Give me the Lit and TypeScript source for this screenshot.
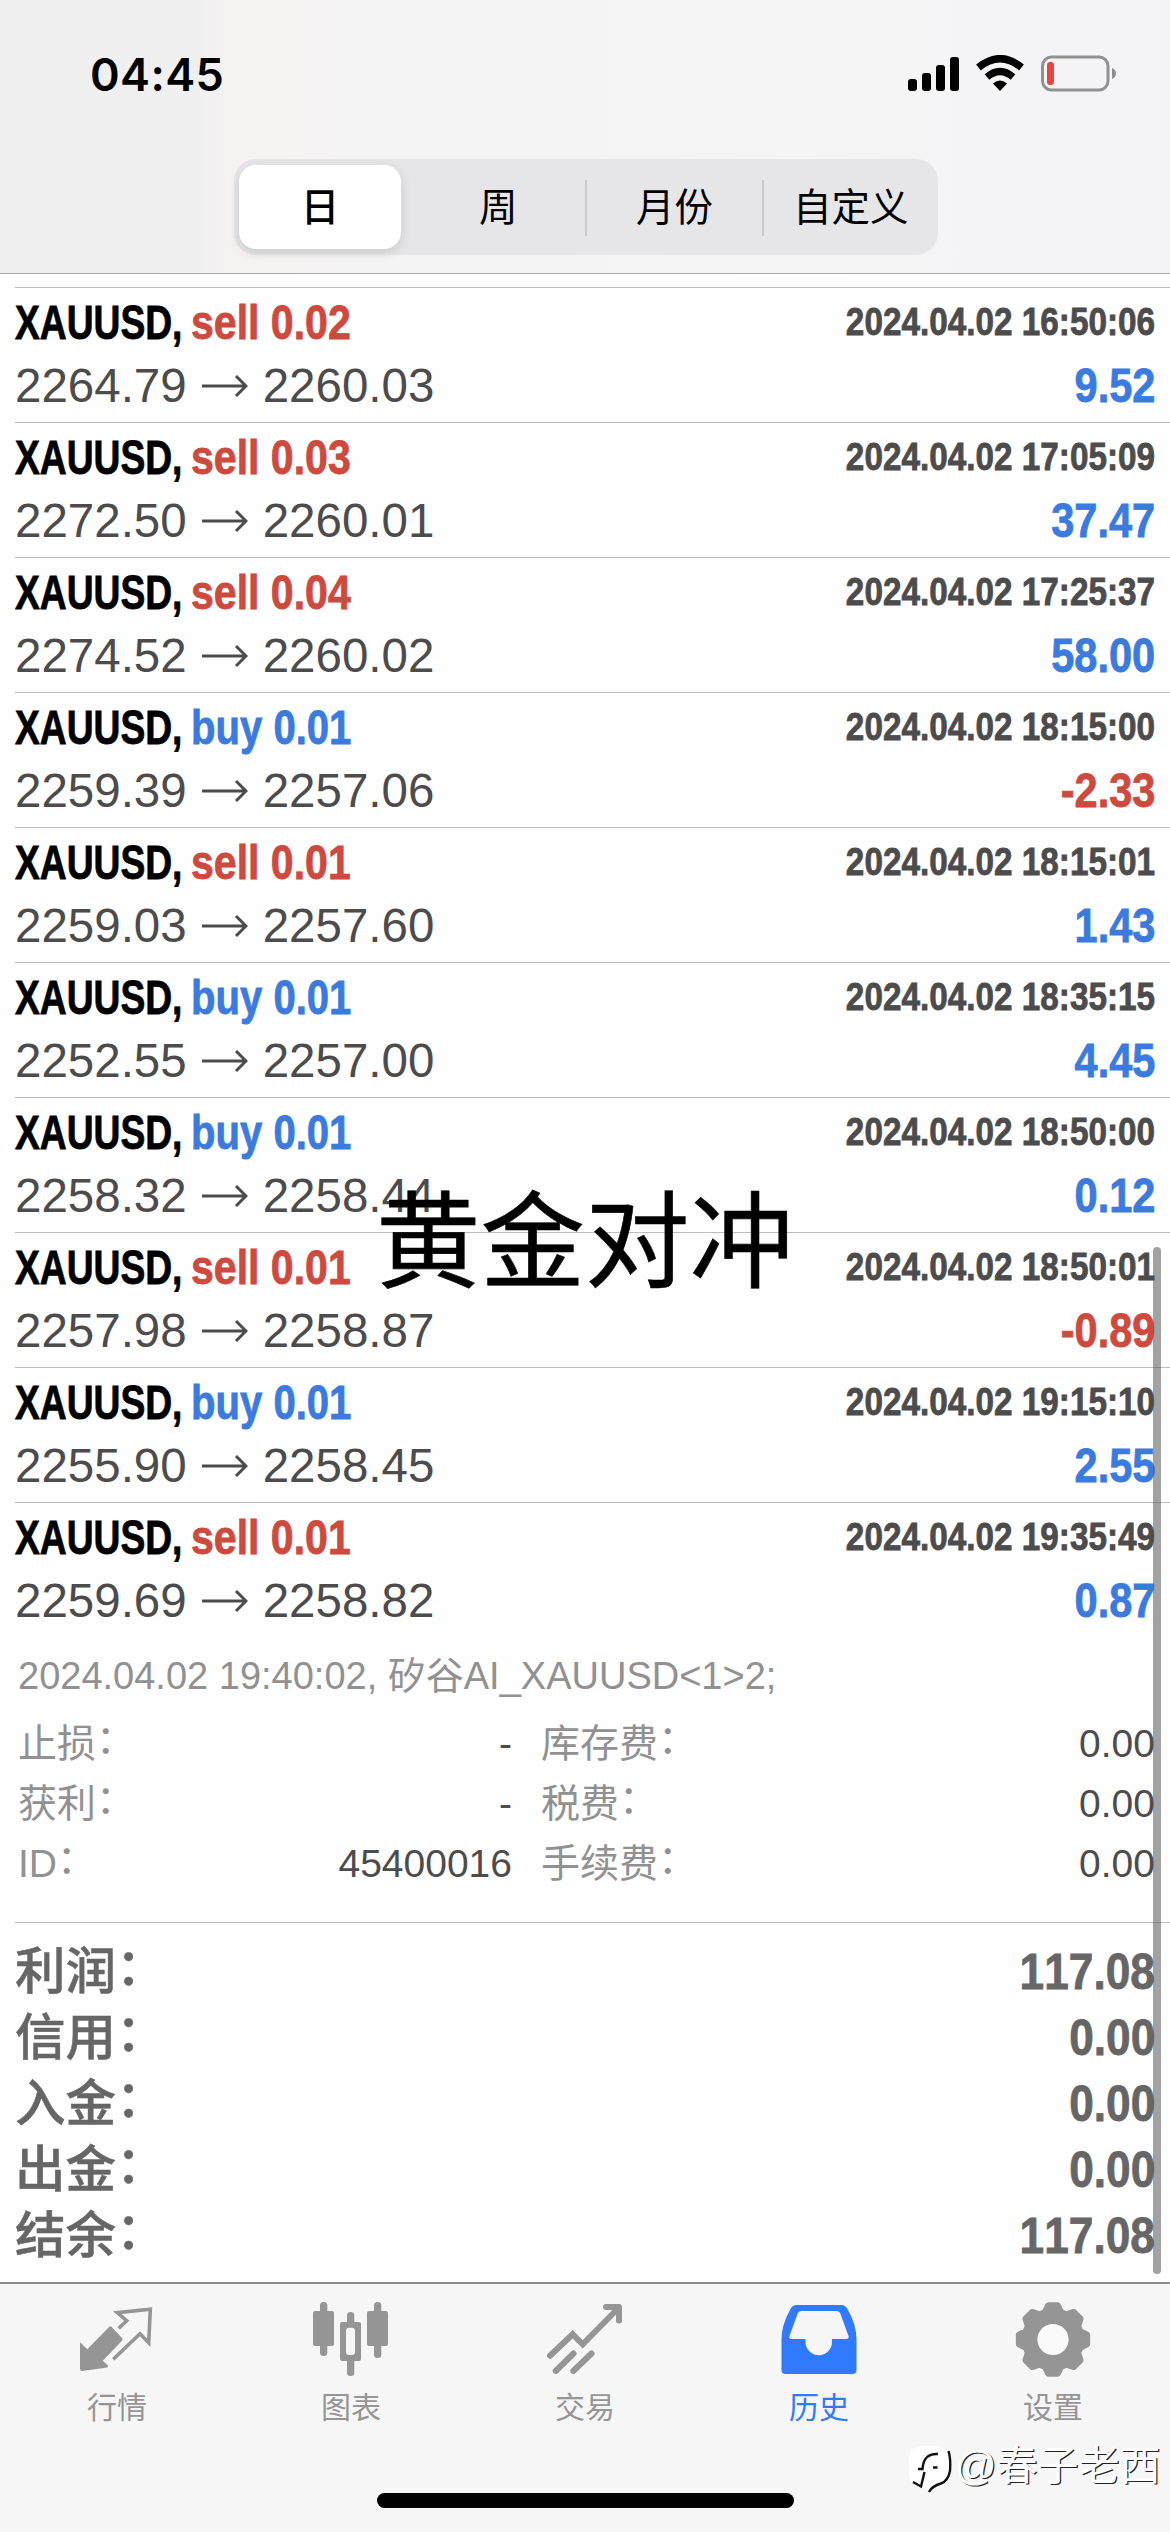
import { LitElement, html, svg, css } from "lit";
import { customElement } from "lit/decorators.js";
import { classMap } from "lit/directives/class-map.js";

interface Deal {
  side: "buy" | "sell";
  lot: string;
  open: string;
  close: string;
  time: string;
  profit: string;
}

const deals: Deal[] = [
  { side: "sell", lot: "0.02", open: "2264.79", close: "2260.03", time: "2024.04.02 16:50:06", profit: "9.52" },
  { side: "sell", lot: "0.03", open: "2272.50", close: "2260.01", time: "2024.04.02 17:05:09", profit: "37.47" },
  { side: "sell", lot: "0.04", open: "2274.52", close: "2260.02", time: "2024.04.02 17:25:37", profit: "58.00" },
  { side: "buy", lot: "0.01", open: "2259.39", close: "2257.06", time: "2024.04.02 18:15:00", profit: "-2.33" },
  { side: "sell", lot: "0.01", open: "2259.03", close: "2257.60", time: "2024.04.02 18:15:01", profit: "1.43" },
  { side: "buy", lot: "0.01", open: "2252.55", close: "2257.00", time: "2024.04.02 18:35:15", profit: "4.45" },
  { side: "buy", lot: "0.01", open: "2258.32", close: "2258.44", time: "2024.04.02 18:50:00", profit: "0.12" },
  { side: "sell", lot: "0.01", open: "2257.98", close: "2258.87", time: "2024.04.02 18:50:01", profit: "-0.89" },
  { side: "buy", lot: "0.01", open: "2255.90", close: "2258.45", time: "2024.04.02 19:15:10", profit: "2.55" },
  { side: "sell", lot: "0.01", open: "2259.69", close: "2258.82", time: "2024.04.02 19:35:49", profit: "0.87" },
];

const details = [
  ["止损", "-", "库存费", "0.00"],
  ["获利", "-", "税费", "0.00"],
  ["ID", "45400016", "手续费", "0.00"],
];

const totals = [
  ["利润", "117.08"],
  ["信用", "0.00"],
  ["入金", "0.00"],
  ["出金", "0.00"],
  ["结余", "117.08"],
];

const gearPath = () => {
  const pts: string[] = [];
  const at = (r: number, deg: number) => {
    const a = (deg * Math.PI) / 180;
    return `${(38 + r * Math.cos(a)).toFixed(2)} ${(37.5 + r * Math.sin(a)).toFixed(2)}`;
  };
  for (let i = 0; i < 8; i++) {
    const c = i * 45 - 90;
    pts.push(at(28.5, c - 17), at(34.5, c - 8), at(34.5, c + 8), at(28.5, c + 17));
  }
  return "M" + pts.join("L") + "Z";
};

const icons = {
  quotes: svg`
    <path d="M1 40.300L8.300 47.300L30 25Q31.300 23.500 32.600 25L43 36Q44.300 37.300 43 38.700L23.700 58.700L29 63.500L28.500 65.500L3 69Q1 69 1 67Z" fill="currentColor"/>
    <path d="M39.700 26.300L47.700 18.700L38.300 10.700L71.300 7.300L69.700 40.700L61 31.700L34.300 57.300" fill="none" stroke="currentColor" stroke-width="3.600"/>`,
  chart: svg`
    <g fill="currentColor"><rect x="0" y="9" width="21" height="35" rx="2"/><rect x="7" y="0" width="7.300" height="54" rx="3.500"/>
    <rect x="54" y="9" width="21" height="35" rx="2"/><rect x="61" y="0" width="7.300" height="56" rx="3.500"/>
    <rect x="34" y="10" width="7.300" height="14" rx="3.500"/><rect x="34" y="56" width="7.300" height="18" rx="3.500"/>
    <path fill-rule="evenodd" d="M29 20H46Q48 20 48 22V57Q48 59 46 59H29Q27 59 27 57V22Q27 20 29 20ZM36 25.700Q33 25.700 33 28.700V50Q33 53 36 53H39Q42 53 42 50V28.700Q42 25.700 39 25.700Z"/></g>`,
  trade: svg`
    <g fill="none" stroke="currentColor" stroke-width="6" stroke-linecap="round" stroke-linejoin="miter">
    <path d="M3 53.700L25.700 32.300L35.700 42.300L71.500 6"/><path d="M59 5H72V18.500" stroke-linejoin="round"/>
    <path d="M8.700 69L26.500 51.500"/><path d="M26.300 69L44.500 51.500"/></g>`,
  history: svg`
    <path transform="translate(0.5 3)" fill-rule="evenodd" fill="currentColor" d="M15 0H60Q64 0 66 4Q75 20 75 34V65Q75 69 71 69H4Q0 69 0 65V34Q0 20 9 4Q11 0 15 0ZM20 6Q17 6 16 9L8 31Q7 34 10 34H24V37A13 13 0 0 0 50.500 37V34H64Q68 34 67 31L59 9Q58 6 55 6Z"/>`,
  settings: svg`
    <path d=${gearPath()} fill="currentColor" stroke="currentColor" stroke-width="6" stroke-linejoin="round"/>
    <circle class="hole" cx="38" cy="37.500" r="15.600"/>`,
};

const tabs = [
  { label: "行情", icon: icons.quotes },
  { label: "图表", icon: icons.chart },
  { label: "交易", icon: icons.trade },
  { label: "历史", icon: icons.history, active: true },
  { label: "设置", icon: icons.settings },
];

@customElement("app-root")
export class AppRoot extends LitElement {
  static styles = css`
    :host {
      display: block;
      position: relative;
      width: 1170px;
      height: 2532px;
      overflow: hidden;
      background: #fefefe;
      color: #4c4c4c;
      font-family: "Liberation Sans", "Noto Sans CJK SC", sans-serif;
      white-space: nowrap;
    }
    * { box-sizing: border-box; }
    svg { display: block; flex: none; }
    .page { display: flex; flex-direction: column; height: 100%; }

    .header {
      flex: none;
      height: 274px;
      border-bottom: 1px solid #a9a9ab;
      background: linear-gradient(90deg, #efeff0 0, #f1f0f1 200px, #f6f2f2 240px, #f5f4f4 350px, #f5f5f6 800px, #f4f3f5 100%);
    }
    .status { display: flex; justify-content: space-between; align-items: center; height: 150px; padding: 0 52px 0 90px; }
    .clock { color: #000; font: 600 45px/60px Inter, "Liberation Sans", sans-serif; letter-spacing: 0.4px; }
    .segments { display: flex; width: 704px; height: 96px; margin: 9px 0 0 234px; padding: 6px 0 6px 5px; border-radius: 22px; background: #e6e6e8; }
    .segment { flex: 1; display: flex; align-items: center; justify-content: center; color: #000; font-size: 38.5px; line-height: 56px; height: 56px; margin-top: 15px; border-left: 2px solid transparent; }
    .segment.ruled { border-left-color: #cbcbce; }
    .segment.selected { flex: none; width: 162px; height: 84px; margin: 0 8px 0 0; padding-top: 2px; border: 0; border-radius: 17px; background: #fff; font-weight: 500; box-shadow: 0 4px 12px rgba(0, 0, 0, 0.12); }

    .list { padding: 13px 0 0 15px; }
    .deal { height: 135px; padding: 3px 15px 0 0; border-top: 1px solid #bdbdbf; }
    .line { display: flex; justify-content: space-between; height: 63px; line-height: 63px; }
    .narrow { font-weight: 700; font-kerning: none; -webkit-text-stroke: 0.8px currentColor; transform-origin: 0 50%; }
    .title { display: flex; font-size: 48px; }
    .symbol { width: 176px; color: #000; transform: scaleX(0.775); }
    .sell, .loss { color: #cf4a3e; }
    .buy, .gain { color: #3b7bdf; }
    .side.sell { transform: scaleX(0.855); }
    .side.buy { transform: scaleX(0.835); }
    .time { font-size: 39px; transform: scaleX(0.854); transform-origin: 100% 50%; margin-top: -1px; }
    .prices { display: flex; align-items: center; gap: 15px; font-size: 47.5px; font-kerning: none; }
    .profit { font-size: 48px; transform: scaleX(0.865); transform-origin: 100% 50%; }

    .details { padding: 9px 15px 0 3px; font-size: 39px; color: #919191; }
    .comment { height: 60px; line-height: 60px; margin-bottom: 8px; font-size: 38px; }
    .detail { display: grid; grid-template-columns: 494px 1fr 200px; height: 60px; line-height: 60px; }
    .pair { display: flex; justify-content: space-between; }
    .third { padding-left: 29px; }
    .value { color: #4c4c4c; font-kerning: none; }
    .right { text-align: right; }
    .colon { vertical-align: 4px; line-height: 0; }

    .totals { margin-top: 28px; padding: 16px 15px 0 0; border-top: 1px solid #bdbdbf; color: #666; }
    .total { display: flex; justify-content: space-between; height: 66px; line-height: 66px; font-size: 50.5px; font-weight: 500; -webkit-text-stroke: 0.5px currentColor; }
    .sum { font-size: 50px; transform: scaleX(0.885); transform-origin: 100% 50%; }

    .tabbar { flex: none; display: flex; height: 250px; margin-top: auto; border-top: 2px solid #8e8e90; background: #f6f6f6; }
    .tab { flex: 1; display: flex; flex-direction: column; align-items: center; padding-top: 18px; gap: 8px; color: #959595; font-size: 30px; line-height: 44px; }
    .tab.active { color: #2f7afe; }
    .hole { fill: #fafafa; }

    .scrollbar { position: absolute; left: 1153px; top: 1247px; width: 8px; height: 1027px; border-radius: 4px; background: rgba(80, 80, 80, 0.53); }
    .home { position: absolute; left: 377px; top: 2493px; width: 417px; height: 15px; border-radius: 8px; background: #000; }
    .caption { position: absolute; left: 376px; top: 1171px; color: #000; font-size: 104.5px; line-height: 144px; -webkit-text-stroke: 0.6px #000; }
    .credit { position: absolute; left: 907px; top: 2437px; display: flex; align-items: center; color: #fff; font-size: 41px; line-height: 56px; text-shadow: 1.2px 1.2px 0 #222; }
  `;

  private deal(d: Deal) {
    return html`<div class="deal">
      <div class="line">
        <div class="title">
          <span class="symbol narrow">XAUUSD,</span>
          <span class=${`side narrow ${d.side}`}>${d.side} ${d.lot}</span>
        </div>
        <div class="narrow time">${d.time}</div>
      </div>
      <div class="line">
        <div class="prices">
          <span>${d.open}</span>
          <svg width="46" height="24" viewBox="0 0 46 24" fill="none" stroke="currentColor" stroke-width="3">
            <path d="M0 12H44M34 2L44 12L34 22" />
          </svg>
          <span>${d.close}</span>
        </div>
        <div class=${"narrow profit " + (d.profit.startsWith("-") ? "loss" : "gain")}>${d.profit}</div>
      </div>
    </div>`;
  }

  private label(text: string) {
    return html`${text}<span class="colon">：</span>`;
  }

  render() {
    return html`
      <div class="page">
        <div class="header">
          <div class="status">
            <div class="clock">04:45</div>
            <svg width="210" height="40" viewBox="0 0 210 40">
              <rect x="0" y="24" width="9" height="12" rx="3" /><rect x="14" y="18" width="9" height="18" rx="3" />
              <rect x="28" y="10" width="9" height="26" rx="3" /><rect x="42" y="2" width="9" height="34" rx="3" />
              <path d="M70.500 12.500Q92 -5 113.500 12.500" fill="none" stroke="#000" stroke-width="7.500" />
              <path d="M79 22Q92 11 105 22" fill="none" stroke="#000" stroke-width="7" />
              <path d="M92 36L85 28.500Q92 22.500 99 28.500Z" />
              <rect x="134.500" y="2" width="65.500" height="33" rx="9" fill="none" stroke="#929292" stroke-width="3" />
              <rect x="139" y="7" width="7" height="23" rx="3" fill="#ea4640" />
              <path d="M204 13Q208 15 208 18.500Q208 22 204 24Z" fill="#8e8e8e" />
            </svg>
          </div>
          <div class="segments">
            <div class="segment selected">日</div>
            <div class="segment">周</div>
            <div class="segment ruled">月份</div>
            <div class="segment ruled">自定义</div>
          </div>
        </div>

        <div class="list">
          ${deals.map((d) => this.deal(d))}
          <div class="details">
            <div class="comment">2024.04.02 19:40:02, 矽谷AI_XAUUSD&lt;1&gt;2;</div>
            ${details.map(
              ([a, b, c, d]) => html`<div class="detail">
                <div class="pair"><span>${this.label(a)}</span><span class="value">${b}</span></div>
                <span class="third">${this.label(c)}</span>
                <span class="value right">${d}</span>
              </div>`
            )}
          </div>
          <div class="totals">
            ${totals.map(([k, v]) => html`<div class="total"><span>${this.label(k)}</span><span class="narrow sum">${v}</span></div>`)}
          </div>
        </div>

        <div class="tabbar">
          ${tabs.map(
            (t) => html`<div class=${classMap({ tab: true, active: !!t.active })}>
              <svg width="76" height="76" viewBox="0 0 76 76">${t.icon}</svg>
              <span>${t.label}</span>
            </div>`
          )}
        </div>
      </div>
      <div class="scrollbar"></div>
      <div class="caption">黄金对冲</div>
      <div class="home"></div>
      <div class="credit">
        <svg width="48" height="58" viewBox="0 0 48 58">
          <rect x="2" y="9" width="40" height="41" rx="13" fill="#fff" />
          <path d="M11 32H15.500Q16.500 16 31 17M17.500 35L14 49.500L6 45M26 30.500H30.500M41.500 14Q44 22 43 34Q41 44 34 46.500Q25 49 22 55" fill="none" stroke="#111" stroke-width="2.400" />
        </svg>
        <span>@春子老西</span>
      </div>
    `;
  }
}
